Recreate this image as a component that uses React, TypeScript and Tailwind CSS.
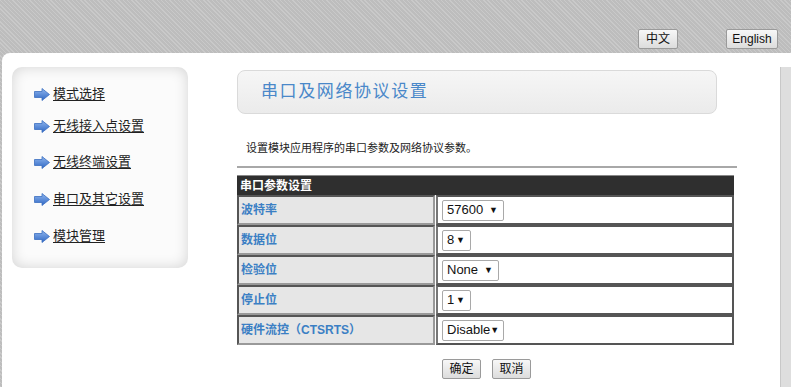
import React from "react";

const cjk = "font-['Liberation_Sans','Noto_Sans_CJK_SC',sans-serif]";

function Arrow() {
  return (
    <svg width="16" height="13" viewBox="0 0 16 13" className="shrink-0">
      <defs>
        <linearGradient id="ag" x1="0" y1="0" x2="0" y2="1">
          <stop offset="0" stopColor="#8fb6ee" />
          <stop offset="1" stopColor="#2f67c4" />
        </linearGradient>
      </defs>
      <polygon points="0.5,3.5 8,3.5 8,0.5 15.5,6.5 8,12.5 8,9.5 0.5,9.5" fill="url(#ag)" stroke="#3b6fc0" strokeWidth="0.8" />
    </svg>
  );
}

function NavItem({ label, mt }: { label: string; mt: string }) {
  return (
    <div className={`flex items-center h-[20px] ${mt}`}>
      <div className="w-[19px]">
        <Arrow />
      </div>
      <span className="text-[13px] text-[#222] underline underline-offset-2">{label}</span>
    </div>
  );
}

function Sel({ value, w }: { value: string; w: string }) {
  return (
    <div
      className={`${w} h-[21px] flex items-center justify-between pl-[4px] pr-[5px] bg-white border border-[#a9a9a9] rounded-[2px] text-[13px] text-[#111] font-['Liberation_Sans',sans-serif]`}
    >
      <span>{value}</span>
      <span className="text-[9px] leading-none">▼</span>
    </div>
  );
}

function Row({ label, value, w }: { label: string; value: string; w: string }) {
  return (
    <div className="flex h-[30px]">
      <div className="w-[198px] border-2 border-[#555] border-r-[#999] border-b-[#999] bg-[#e6e6e6] flex items-center pl-[2px] text-[12px] font-bold text-[#3b7fc4]">
        {label}
      </div>
      <div className="flex-1 border-2 border-[#555] border-l-[#777] bg-white flex items-center pl-[4px] ml-[1px]">
        <Sel value={value} w={w} />
      </div>
    </div>
  );
}

function Btn({ children, w }: { children: React.ReactNode; w: string }) {
  return (
    <div
      className={`${w} h-[20px] flex items-center justify-center border border-[#9a9a9a] rounded-[2px] bg-[linear-gradient(#f7f7f7,#dcdcdc)] text-[12px] text-[#111]`}
    >
      {children}
    </div>
  );
}

export default function App() {
  return (
    <div
      className={`w-[791px] h-[387px] overflow-hidden flex flex-col ${cjk} bg-[#c3c3c3] bg-[repeating-linear-gradient(45deg,#c9c9c9_0px,#c9c9c9_1px,#bdbdbd_1px,#bdbdbd_3px)]`}
    >
      <div className="h-[53px] shrink-0 flex items-start justify-end pt-[29px] pr-[13px] gap-[48px]">
        <Btn w="w-[40px] h-[19px]">中文</Btn>
        <Btn w="w-[52px] h-[19px]">English</Btn>
      </div>
      <div className="flex-1 ml-[2px] bg-white rounded-tl-[8px] flex">
        <div className="pl-[10px] pt-[14px]">
          <div className="w-[176px] h-[201px] rounded-[10px] bg-[#fbfbfb] shadow-[inset_0_0_14px_rgba(0,0,0,0.16)] pt-[17px] pl-[22px] flex flex-col">
            <NavItem label="模式选择" mt="" />
            <NavItem label="无线接入点设置" mt="mt-[12px]" />
            <NavItem label="无线终端设置" mt="mt-[16px]" />
            <NavItem label="串口及其它设置" mt="mt-[17px]" />
            <NavItem label="模块管理" mt="mt-[17px]" />
          </div>
        </div>
        <div className="ml-[49px] pt-[17px] w-[500px] flex flex-col">
          <div className="w-[480px] h-[44px] rounded-[8px] border border-[#dadada] bg-[linear-gradient(#f6f6f6,#ebebeb)] flex items-center pl-[23px]">
            <span className="text-[17px] tracking-[1.6px] text-[#4a88c9]">串口及网络协议设置</span>
          </div>
          <div className="mt-[26px] pl-[9px] text-[11px] text-[#222] h-[16px] leading-[16px]">
            设置模块应用程序的串口参数及网络协议参数。
          </div>
          <div className="mt-[10px] h-[2px] bg-[#a8a8a8]" />
          <div className="mt-[7px] w-[497px] flex flex-col">
            <div className="h-[20px] bg-[#2f2f2f] border-t border-[#888] flex items-center pl-[3px] text-[12px] font-bold text-white">
              串口参数设置
            </div>
            <Row label="波特率" value="57600" w="w-[62px]" />
            <Row label="数据位" value="8" w="w-[29px]" />
            <Row label="检验位" value="None" w="w-[57px]" />
            <Row label="停止位" value="1" w="w-[29px]" />
            <Row label="硬件流控（CTSRTS）" value="Disable" w="w-[62px]" />
          </div>
          <div className="mt-[14px] w-[497px] flex justify-center gap-[11px] pl-[2px]">
            <Btn w="w-[39px]">确定</Btn>
            <Btn w="w-[39px]">取消</Btn>
          </div>
        </div>
        <div className="flex-1" />
        <div className="w-[11px] mt-[14px] bg-[#dedede] border-l border-[#c8c8c8]" />
      </div>
    </div>
  );
}
